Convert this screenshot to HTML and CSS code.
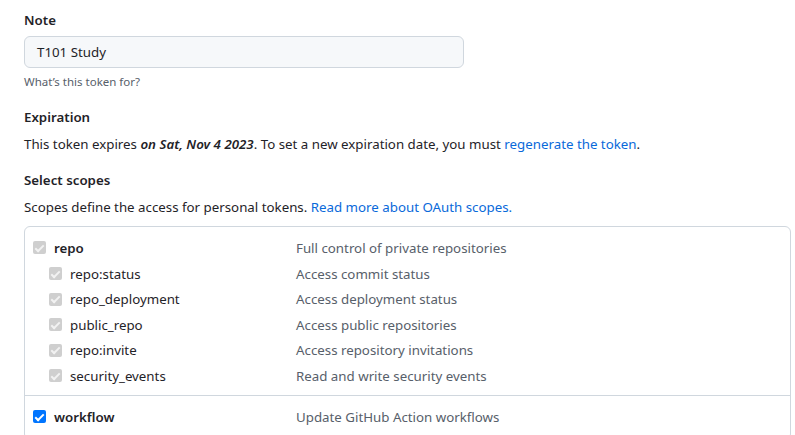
FILE: index.html
```html
<!DOCTYPE html>
<html>
<head>
<meta charset="utf-8">
<link rel="stylesheet" href="styles.css">
</head>
<body>
<div class="page">
  <div class="group">
    <div class="label">Note</div>
    <div class="input">T101 Study</div>
    <div class="hint">What’s this token for?</div>
  </div>
  <div class="group">
    <div class="label">Expiration</div>
    <p class="text">This token expires <em>on Sat, Nov 4 2023</em>. To set a new expiration date, you must <a>regenerate the token</a>.</p>
  </div>
  <div class="group">
    <div class="label">Select scopes</div>
    <p class="text last">Scopes define the access for personal tokens. <a>Read more about OAuth scopes.</a></p>
  </div>
  <div class="scopes">
    <div class="section">
      <div class="row parent"><span class="cb dis"></span><span class="name">repo</span><span class="desc">Full control of private repositories</span></div>
      <div class="row child"><span class="cb dis"></span><span class="name">repo:status</span><span class="desc">Access commit status</span></div>
      <div class="row child"><span class="cb dis"></span><span class="name">repo_deployment</span><span class="desc">Access deployment status</span></div>
      <div class="row child"><span class="cb dis"></span><span class="name">public_repo</span><span class="desc">Access public repositories</span></div>
      <div class="row child"><span class="cb dis"></span><span class="name">repo:invite</span><span class="desc">Access repository invitations</span></div>
      <div class="row child"><span class="cb dis"></span><span class="name">security_events</span><span class="desc">Read and write security events</span></div>
    </div>
    <div class="section">
      <div class="row parent"><span class="cb on"></span><span class="name">workflow</span><span class="desc">Update GitHub Action workflows</span></div>
    </div>
  </div>
</div>
</body>
</html>
```
FILE: styles.css
```css
* { box-sizing: border-box; }
html, body { margin: 0; padding: 0; background: #fff; }
body {
  font-family: "Noto Sans", "Segoe UI", sans-serif;
  font-size: 13.3px;
  color: #1f2328;
  overflow: hidden;
  height: 435px;
}
.page { padding: 11px 4px 0 24px; }
.label { font-weight: 600; font-size: 13.3px; line-height: 18px; }
.input {
  margin-top: 7px;
  width: 440px;
  height: 32px;
  background: #f6f8fa;
  border: 1px solid #d0d7de;
  border-radius: 6px;
  padding: 0 12px;
  line-height: 30px;
}
.hint { font-size: 11.5px; color: #57606a; margin-top: 6px; line-height: 16px; margin-bottom: 18px; }
.text { margin: 8px 0 17px; line-height: 20px; }
.text.last { margin-bottom: 9px; }
.text a { color: #0969da; }
.text em { font-weight: 600; }
.scopes {
  border: 1px solid #d0d7de;
  border-radius: 6px;
  width: 767px;
  height: 214px;
}
.section { padding: 8.2px 0 6px; }
.section + .section { border-top: 1px solid #d0d7de; }
.row { display: flex; align-items: center; height: 25.6px; }
.row .cb { flex: none; width: 13px; height: 13px; border-radius: 2px; margin-left: 8px; margin-right: 8px; position: relative; }
.row.child .cb { margin-left: 24px; }
.name { width: 242px; flex: none; }
.row.child .name { width: 226px; }
.row.parent .name { font-weight: 600; }
.desc { color: #57606a; }
.cb.dis { background: #cfcfcf; }
.cb.on { background: #0075ff; }
.cb::after {
  content: "";
  position: absolute;
  left: 4px; top: 1.5px;
  width: 3px; height: 7px;
  border: solid #fff;
  border-width: 0 2px 2px 0;
  transform: rotate(45deg);
}
.cb.dis::after { border-color: #f2f2f2; }
```
